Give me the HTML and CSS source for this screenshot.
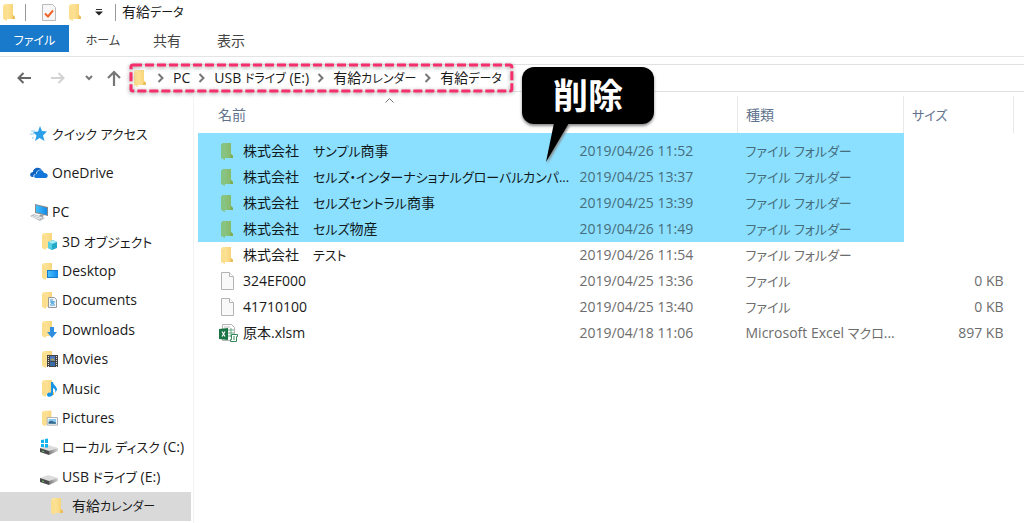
FILE: index.html
```html
<!DOCTYPE html>
<html lang="ja">
<head>
    <meta charset="UTF-8">
    <title>有給データ</title>
    <link rel="stylesheet" href="styles.css">
</head>
<body>
<!-- shared icons -->
<svg class="defs" width="0" height="0">
    <defs>
        <linearGradient id="gold" x1="0" x2="1"><stop offset="0" stop-color="#ffe9a6"/><stop offset="1" stop-color="#f6d06f"/></linearGradient>
        <linearGradient id="green" x1="0" x2="1"><stop offset="0" stop-color="#8bc58a"/><stop offset="1" stop-color="#85b963"/></linearGradient>
        <linearGradient id="screen" x1="0" x2="1"><stop offset="0" stop-color="#45c0ff"/><stop offset="1" stop-color="#1389e6"/></linearGradient>
        <linearGradient id="metal" x1="0" x2="1"><stop offset="0" stop-color="#777"/><stop offset="1" stop-color="#d8d8d8"/></linearGradient>
        <symbol id="folder" viewBox="0 0 12 17"><path d="M1 0h9v11l2 2v2H1z" fill="url(#gold)"/><path d="M0 1l4 2v14l-4-2z" fill="#fbdf8f"/><path d="M10 11l2 2v2H9z" fill="#e9bd58"/></symbol>
        <symbol id="folder-green" viewBox="0 0 12 17"><path d="M1 0h9v11l2 2v2H1z" fill="url(#green)"/><path d="M0 1l4 2v14l-4-2z" fill="#86c483"/><path d="M10 11l2 2v2H9z" fill="#7eac50"/></symbol>
        <symbol id="file" viewBox="0 0 15 18"><path d="M1.500.5h8l4 4v13h-12z" fill="#f9f9f9" stroke="#b4b4b4"/><path d="M9.500.5v4h4" fill="#fff" stroke="#b4b4b4"/></symbol>
        <symbol id="chevron" viewBox="0 0 7 10"><path d="M1.500 1l4 4-4 4" fill="none" stroke="#777" stroke-width="2"/></symbol>
        <symbol id="drive" viewBox="0 0 18 16"><path d="M0 9l8-3 10 3-9 4z" fill="#dcdcdc"/><path d="M0 9l9 3v4l-9-3z" fill="#4b4b4b"/><path d="M9 12l9-3v3l-9 4z" fill="url(#metal)"/><path d="M2 12l2 .6" stroke="#62d36a"/></symbol>
    </defs>
</svg>
<header>
    <div class="titlebar">
        <svg width="12" height="17"><use href="#folder"/></svg>
        <span class="bar"></span>
        <svg class="check" width="14" height="17" viewBox="0 0 14 17"><path d="M.5.5h10l3 3v13H.5z" fill="#f7f7f7" stroke="#bbb"/><path d="M3 9.500l3 3 5-6" fill="none" stroke="#f0642c" stroke-width="2"/></svg>
        <svg class="new-folder" width="12" height="17"><use href="#folder"/></svg>
        <svg class="more" width="8" height="8" viewBox="0 0 8 8"><path d="M1 .5h6" stroke="#333"/><path d="M0 2.500h8l-4 4z" fill="#222"/></svg>
        <span class="bar"></span>
        <span class="title">有給<span class="kana">データ</span></span>
    </div>
    <div class="tabs">
        <button class="tab file-tab"><span class="kana">ファイル</span></button>
        <button class="tab"><span class="kana">ホーム</span></button>
        <button class="tab">共有</button>
        <button class="tab">表示</button>
    </div>
    <div class="address-row">
        <div class="arrows">
            <button aria-label="戻る"><svg width="14" height="12" viewBox="0 0 14 12"><path d="M14 6H1.500M6.500 1l-5 5 5 5" fill="none" stroke="#666" stroke-width="2"/></svg></button>
            <button aria-label="進む"><svg width="14" height="12" viewBox="0 0 14 12"><path d="M0 6h12.500M7.500 1l5 5-5 5" fill="none" stroke="#d2d2d2" stroke-width="2"/></svg></button>
            <button class="recent" aria-label="履歴"><svg width="8" height="6" viewBox="0 0 8 6"><path d="M1 1l3 3 3-3" fill="none" stroke="#777" stroke-width="2"/></svg></button>
            <button aria-label="上へ"><svg width="14" height="16" viewBox="0 0 14 16"><path d="M7 16V2M1 8l6-6 6 6" fill="none" stroke="#777" stroke-width="2.200"/></svg></button>
        </div>
        <div class="address">
            <div class="crumbs">
                <svg class="frame" width="100%" height="100%"><rect x="1" y="1" width="100%" height="100%" rx="2"/></svg>
                <svg class="place" width="12" height="17"><use href="#folder"/></svg>
                <svg class="chevron" width="7" height="10"><use href="#chevron"/></svg>
                <button>PC</button>
                <svg class="chevron" width="7" height="10"><use href="#chevron"/></svg>
                <button>USB <span class="kana">ドライブ</span> (E:)</button>
                <svg class="chevron" width="7" height="10"><use href="#chevron"/></svg>
                <button>有給<span class="kana">カレンダー</span></button>
                <svg class="chevron" width="7" height="10"><use href="#chevron"/></svg>
                <button>有給<span class="kana">データ</span></button>
            </div>
        </div>
    </div>
</header>
<div class="content">
    <nav class="sidebar">
        <a class="root" href="#"><svg width="18" height="16" viewBox="0 0 18 16"><path d="M10 0l2 5 5 .5-4 4 1.500 5.500-5-3L5 15l1.500-5.500L3 6l5-.5z" fill="#2b9fe8"/><path d="M1 5h4M0 8h4M2 12h2" stroke="#8ecdf3"/></svg><span class="kana">クイック アクセス</span></a>
        <a class="root" href="#"><svg width="18" height="16" viewBox="0 0 18 16"><path d="M2 12C-1 11 0 7 3 7c0-4 6-6 9-2C8 4 6 7 6 9c-2 0-3 1-2.500 3z" fill="#0f63c1"/><path d="M6 13c-3-.5-2-4 .5-4C7 4 13 4 14 8c4-.5 5 4 2 5z" fill="#1277d8"/></svg>OneDrive</a>
        <a class="root" href="#"><svg width="18" height="17" viewBox="0 0 18 17"><path d="M5 0l13 3v9L5 9z" fill="#888"/><path d="M6 1l11 3v7L6 8z" fill="url(#screen)"/><path d="M10 10.500l-1 2 4 .5.500-2z" fill="#999"/><path d="M0 12l4-2 11 4-5 3z" fill="#b7bcc2"/><path d="M2 12.500l8 2.500M4 11.500l8 2.500" stroke="#eee"/></svg>PC</a>
        <div class="tree">
            <a href="#"><svg width="16" height="17" viewBox="0 0 16 17"><use href="#folder" width="12" height="17"/><path d="M6 9l5-2 4 2v6l-5 2-4-2z" fill="#23a9c8"/><path d="M6 9l5-2 4 2-5 2z" fill="#a3edf5"/><path d="M6 9l4 2v6l-4-2z" fill="#57cfe0"/></svg><span>3D <span class="kana">オブジェクト</span></span></a>
            <a href="#"><svg width="16" height="17" viewBox="0 0 16 17"><use href="#folder" width="12" height="17"/><path d="M5 7h11v8H5z" fill="#1778ce"/><path d="M6 8h10v6H6z" fill="url(#screen)"/></svg>Desktop</a>
            <a href="#"><svg width="16" height="17" viewBox="0 0 16 17"><use href="#folder" width="12" height="17"/><path d="M6.500 5.500h6l2 2v8h-8z" fill="#edf5fb" stroke="#999"/><path d="M8 8h3M8 10h5M8 13h5" stroke="#4899d5"/><path d="M9 9h3v3H9z" fill="#66b1de"/></svg>Documents</a>
            <a href="#"><svg width="16" height="17" viewBox="0 0 16 17"><use href="#folder" width="12" height="17"/><path d="M8 6h4v5h3l-5 6-5-6h3z" fill="#2f8ee0"/></svg>Downloads</a>
            <a href="#"><svg width="16" height="17" viewBox="0 0 16 17"><use href="#folder" width="12" height="17"/><path d="M5 4h11v12H5z" fill="#444"/><path d="M8 5h5v5H8z" fill="#4e78ba"/><path d="M8 11h5v4H8z" fill="#376ca9"/><path d="M8 9l3-2 2 3z" fill="#a7a05e"/><path d="M6.500 5v11M14.500 5v11" stroke="#ddd" stroke-dasharray="1 1"/></svg>Movies</a>
            <a href="#"><svg width="16" height="17" viewBox="0 0 16 17"><use href="#folder" width="12" height="17"/><path d="M9 2h2c0 3 4 4 4 8l-2 3c1-3 0-4-2-5v6c0 3-6 4-6 1 0-2 2-3 4-2z" fill="#1695e6"/></svg>Music</a>
            <a href="#"><svg width="17" height="17" viewBox="0 0 17 17"><use href="#folder" width="12" height="17"/><path d="M5.500 7.500h11v8h-11z" fill="#fff" stroke="#aaa"/><path d="M7 9h8v5H7z" fill="#87c7ef"/><path d="M7 12l3-1 5 2v1H7z" fill="#356787"/></svg>Pictures</a>
            <a href="#"><svg class="disk" width="18" height="16" viewBox="0 0 18 16"><use href="#drive" width="18" height="16"/><path d="M1 1l3-.5V4H1zM5 0l3-.5V4H5zM1 5h3v3H1zM5 5h3v3.500H5z" fill="#10b5ee"/></svg><span><span class="kana">ローカル ディスク</span> (C:)</span></a>
            <a href="#"><svg class="disk" width="18" height="16"><use href="#drive"/></svg><span>USB <span class="kana">ドライブ</span> (E:)</span></a>
            <a class="current" href="#"><svg width="12" height="17"><use href="#folder"/></svg><span>有給<span class="kana">カレンダー</span></span></a>
        </div>
    </nav>
    <main>
        <table>
            <thead>
                <tr>
                    <th class="name">名前<svg class="sort" width="9" height="5" viewBox="0 0 9 5"><path d="M.5 4.500l4-4 4 4" fill="none" stroke="#777"/></svg></th>
                    <th class="date"></th>
                    <th class="type">種類</th>
                    <th class="size"><span class="kana">サイズ</span></th>
                </tr>
            </thead>
            <tbody>
                <tr class="selected"><td><svg width="16" height="17"><use href="#folder-green" width="14"/></svg><span>株式会社　<span class="kana">サンプル</span>商事</span></td><td>2019/04/26 11:52</td><td><span class="kana">ファイル フォルダー</span></td><td></td></tr>
                <tr class="selected"><td><svg width="16" height="17"><use href="#folder-green" width="14"/></svg><span>株式会社　<span class="kana">セルズ・インターナショナルグローバルカンパ...</span></span></td><td>2019/04/25 13:37</td><td><span class="kana">ファイル フォルダー</span></td><td></td></tr>
                <tr class="selected"><td><svg width="16" height="17"><use href="#folder-green" width="14"/></svg><span>株式会社　<span class="kana">セルズセントラル</span>商事</span></td><td>2019/04/25 13:39</td><td><span class="kana">ファイル フォルダー</span></td><td></td></tr>
                <tr class="selected"><td><svg width="16" height="17"><use href="#folder-green" width="14"/></svg><span>株式会社　<span class="kana">セルズ</span>物産</span></td><td>2019/04/26 11:49</td><td><span class="kana">ファイル フォルダー</span></td><td></td></tr>
                <tr><td><svg width="16" height="17"><use href="#folder" width="14"/></svg><span>株式会社　<span class="kana">テスト</span></span></td><td>2019/04/26 11:54</td><td><span class="kana">ファイル フォルダー</span></td><td></td></tr>
                <tr><td><svg width="16" height="18"><use href="#file" width="15"/></svg>324EF000</td><td>2019/04/25 13:36</td><td><span class="kana">ファイル</span></td><td>0 KB</td></tr>
                <tr><td><svg width="16" height="18"><use href="#file" width="15"/></svg>41710100</td><td>2019/04/25 13:40</td><td><span class="kana">ファイル</span></td><td>0 KB</td></tr>
                <tr><td><svg width="16" height="18" viewBox="0 0 16 18"><path d="M2.500.5h9l3 3v13h-12z" fill="#fff" stroke="#b4b4b4"/><path d="M4 3h6" stroke="#bbb"/><path d="M8 6h6M8 9h6M8 12h6M11 4v9" stroke="#68a983"/><path d="M-1 5l9-1v12l-9-1z" fill="#1b7445"/><path d="M2 7.500l3 5M5 7.500l-3 5" stroke="#fff" stroke-width="1.200"/><path d="M11.500 10.500h6v2h-1v5h-6v-2h1z" fill="#fff" stroke="#38885a"/><path d="M13 13h2M13 15h2" stroke="#38885a"/></svg>原本.xlsm</td><td>2019/04/18 11:06</td><td>Microsoft Excel <span class="kana">マクロ</span>...</td><td>897 KB</td></tr>
            </tbody>
        </table>
        <div class="callout">削除<svg width="22" height="40" viewBox="0 0 22 40"><path d="M8 0h15L0 39z"/></svg></div>
    </main>
</div>
</body>
</html>
```
FILE: styles.css
```css
* { box-sizing: border-box; }
body { margin: 0; min-height: 100vh; display: flex; flex-direction: column; background: #fff; color: #1a1a1a; font: 14px/20px "Open Sans", "Noto Sans CJK JP", sans-serif; font-feature-settings: "palt"; }
svg { flex: none; overflow: visible; }
.defs { position: absolute; }
button { padding: 0; border: 0; background: none; color: inherit; font: inherit; font-feature-settings: inherit; white-space: nowrap; }
a { color: inherit; text-decoration: none; white-space: nowrap; }

/* kana is set a little smaller than kanji and latin */
.kana { font-size: 13px; }
.title .kana, .tab .kana, .crumbs .kana, .current .kana { font-size: 12px; }

/* title bar and ribbon tabs */
.titlebar { display: flex; align-items: center; height: 25px; padding-left: 3px; }
.bar { width: 1px; height: 17px; margin-left: 10px; background: #999; }
.check { margin-left: 16px; }
.new-folder { margin-left: 13px; }
.more { margin-left: 14px; }
.titlebar .more + .bar { margin-left: 12px; }
.title { margin-left: 6px; }
.tabs { display: flex; height: 32px; padding-bottom: 4px; border-bottom: 1px solid #e4e4e4; }
.tab { width: 64px; padding-top: 4px; color: #444; }
.file-tab { width: 69px; margin-right: 2px; background: #1979ca; color: #fff; }

/* address bar */
.address-row { display: flex; align-items: center; padding: 7px 0 4px; }
.arrows { display: flex; align-items: center; gap: 20px; width: 130px; padding-left: 17px; }
.arrows button { display: flex; }
.arrows .recent { margin-right: -6px; }
.address { flex: 1; height: 28px; border: 1px solid #e0e0e0; border-width: 1px 0; }
.crumbs { position: relative; display: inline-flex; align-items: center; height: 26px; padding: 0 9px 0 4px; }
.frame { position: absolute; top: -1px; left: 0; fill: none; stroke: #f52f6b; stroke-width: 3px; stroke-dasharray: 9 3; filter: drop-shadow(0 1px 2px #999); }
.place { margin-right: 3px; }
.chevron { margin: 0 9px 0 8px; }

/* folder tree */
.content { flex: 1; display: flex; }
.sidebar { display: flex; flex-direction: column; width: 194px; padding: 23px 2px 2px 0; border-right: 1px solid #f3f3f3; }
.sidebar a { display: flex; align-items: center; gap: 4px; }
.root { height: 30px; margin-bottom: 9px; padding-left: 30px; }
.root:nth-child(3) { margin-bottom: 0; }
.tree { flex: 1; display: grid; grid-auto-rows: 1fr; }
.tree a { padding-left: 42px; }
.tree svg { width: 16px; }
.tree .disk { width: 18px; margin-left: -2px; }
.sidebar .current { gap: 9px; padding-left: 51px; background: #d9d9d9; }
.tree .current svg { width: 12px; }

/* file list */
main { position: relative; flex: 1; padding: 0 10px 0 4px; }
table { width: 100%; table-layout: fixed; border-collapse: collapse; }
th { position: relative; height: 37px; padding: 0 8px; border-right: 1px solid #e8e8e8; color: #60728c; font-weight: normal; text-align: left; }
th.name { padding-left: 20px; border: 0; }
.date, .type { width: 166px; }
.size { width: 110px; }
.sort { position: absolute; top: 2px; left: 50%; }
td { height: 26px; padding: 0 8px; color: #6d6d6d; white-space: nowrap; }
td:first-child { display: flex; align-items: center; gap: 7px; padding: 0 0 0 22px; color: #1a1a1a; }
td:last-child { padding-right: 10px; text-align: right; }
tbody tr:first-child td { height: 31px; padding-top: 5px; }
.selected td { background: #8ce0ff; color: #456d7c; }
.selected td:first-child { color: #10191c; }
.selected td:last-child { background: none; }

/* speech bubble over the list */
.callout { position: absolute; top: -29px; left: 328px; width: 132px; height: 57px; border-radius: 12px; background: #000; box-shadow: 0 2px 3px #888; color: #fff; font-size: 35px; font-weight: bold; line-height: 57px; text-align: center; }
.callout svg { position: absolute; top: 56px; left: 24px; filter: drop-shadow(1px 2px 1px #888); }
```
